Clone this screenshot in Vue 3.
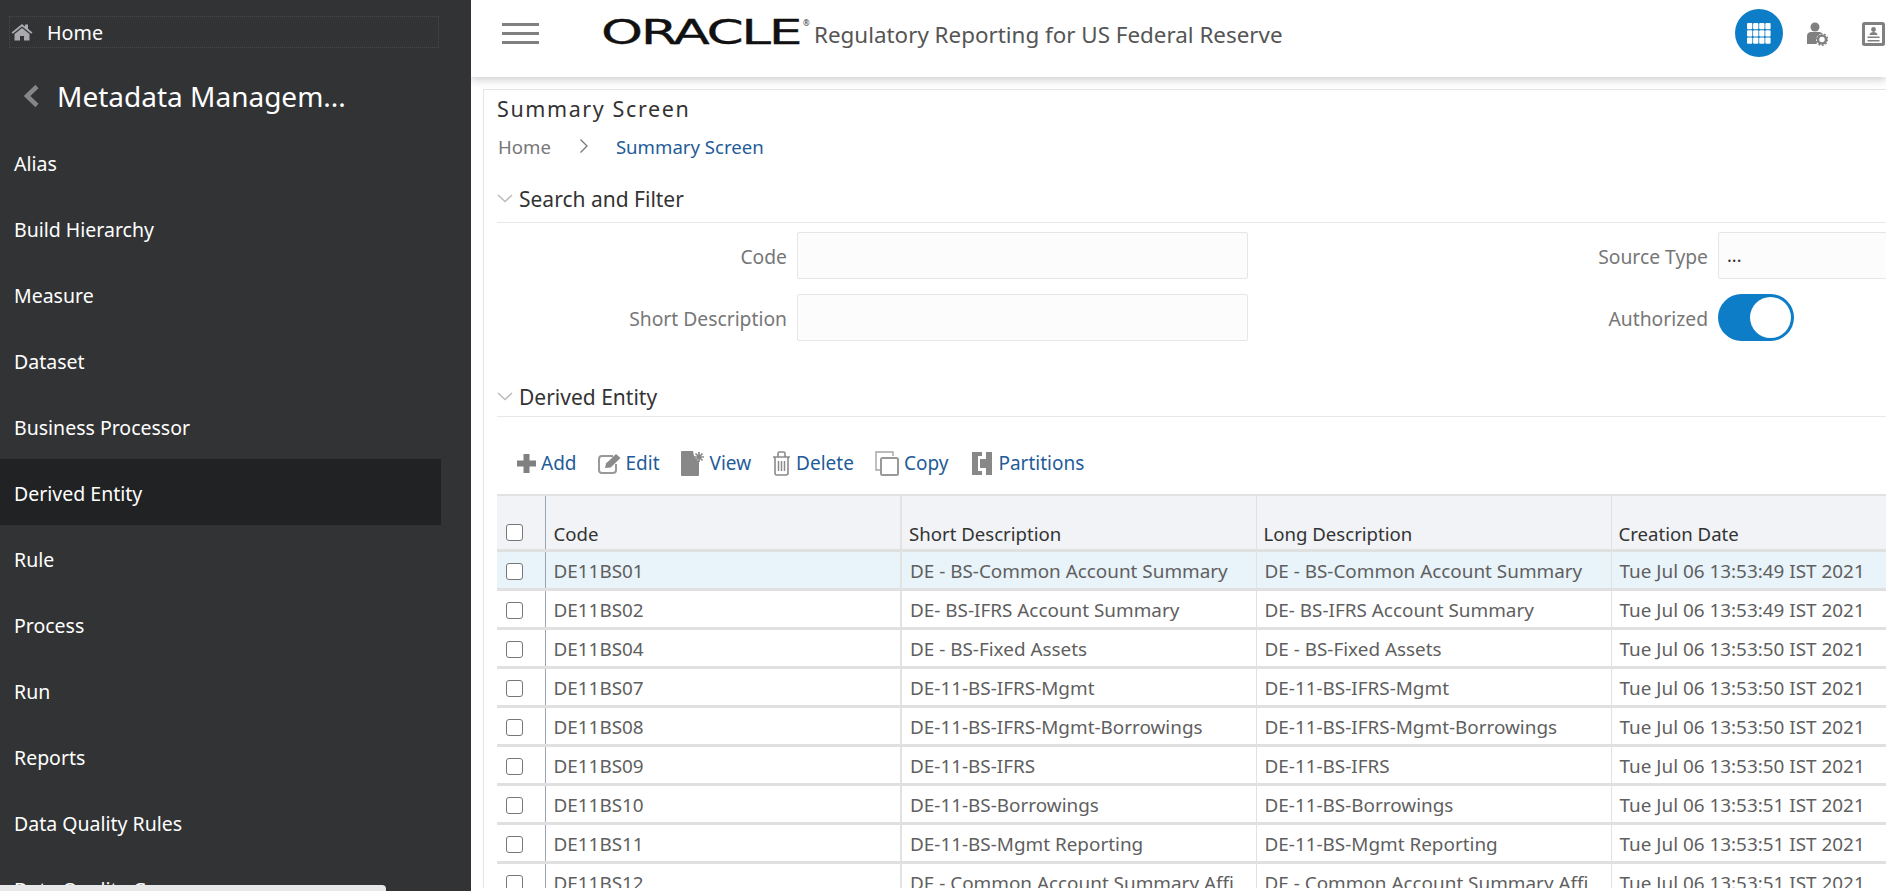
<script setup>
const menu = ['Alias','Build Hierarchy','Measure','Dataset','Business Processor','Derived Entity','Rule','Process','Run','Reports','Data Quality Rules','Data Quality Groups']
const rows = [
  ['DE11BS01','DE - BS-Common Account Summary','DE - BS-Common Account Summary','Tue Jul 06 13:53:49 IST 2021'],
  ['DE11BS02','DE- BS-IFRS Account Summary','DE- BS-IFRS Account Summary','Tue Jul 06 13:53:49 IST 2021'],
  ['DE11BS04','DE - BS-Fixed Assets','DE - BS-Fixed Assets','Tue Jul 06 13:53:50 IST 2021'],
  ['DE11BS07','DE-11-BS-IFRS-Mgmt','DE-11-BS-IFRS-Mgmt','Tue Jul 06 13:53:50 IST 2021'],
  ['DE11BS08','DE-11-BS-IFRS-Mgmt-Borrowings','DE-11-BS-IFRS-Mgmt-Borrowings','Tue Jul 06 13:53:50 IST 2021'],
  ['DE11BS09','DE-11-BS-IFRS','DE-11-BS-IFRS','Tue Jul 06 13:53:50 IST 2021'],
  ['DE11BS10','DE-11-BS-Borrowings','DE-11-BS-Borrowings','Tue Jul 06 13:53:51 IST 2021'],
  ['DE11BS11','DE-11-BS-Mgmt Reporting','DE-11-BS-Mgmt Reporting','Tue Jul 06 13:53:51 IST 2021'],
  ['DE11BS12','DE - Common Account Summary Affi','DE - Common Account Summary Affi','Tue Jul 06 13:53:51 IST 2021'],
]
</script>

<template>
  <div class="page">
    <aside class="side">
      <div class="home">
        <svg class="home-ic" width="22" height="18" viewBox="0 0 22 18"><path d="M11 1 0.5 9.5l1.3 1.3L11 3.5l9.2 7.3 1.3-1.3L17 5.8V1.5h-3v2z" fill="#a9a9ae"/><path d="M3.5 11 11 5l7.500 6v6.500h-5.500v-4.500h-4v4.500H3.500z" fill="#a9a9ae"/></svg>
        <span>Home</span>
      </div>
      <div class="back">
        <svg width="17" height="24" viewBox="0 0 17 24"><path d="M14 2.500 4 12l10 9.500" fill="none" stroke="#85858a" stroke-width="4.500"/></svg>
        <span>Metadata Managem...</span>
      </div>
      <nav class="menu">
        <div v-for="m in menu" :key="m" class="item" :class="{ on: m === 'Derived Entity' }">{{ m }}</div>
      </nav>
      <div class="hscroll"></div>
    </aside>

    <main class="main">
      <header class="top">
        <div class="burger"><i></i><i></i><i></i></div>
        <span class="logo"><span class="logo-t">ORACLE</span></span><sup class="reg">®</sup>
        <span class="product">Regulatory Reporting for US Federal Reserve</span>
        <div class="grid-btn">
          <svg width="24" height="21" viewBox="0 0 24 21" fill="#fff">
            <template v-for="r in 3" :key="r">
              <rect v-for="c in 4" :key="c" :x="(c-1)*6.1" :y="(r-1)*7.2" width="5.3" height="6.300" rx="1"/>
            </template>
          </svg>
        </div>
        <svg class="user-ic" width="22" height="24" viewBox="0 0 22 24">
          <circle cx="9" cy="5" r="4.500" fill="#808080"/>
          <path d="M1 22v-8c0-3 2-4 4-4h8c1.500 0 2.500.5 3 1.500-3 .5-6 3-6 6.500 0 1.500.5 3 1 4z" fill="#808080"/>
          <circle cx="16" cy="17.500" r="4" fill="none" stroke="#808080" stroke-width="2.500"/>
          <circle cx="16" cy="17.500" r="5.800" fill="none" stroke="#808080" stroke-width="1.400" stroke-dasharray="1.800 1.800"/>
        </svg>
        <svg class="card-ic" width="23" height="24" viewBox="0 0 23 24">
          <rect x="1.500" y="1.500" width="20" height="21" rx="1" fill="none" stroke="#808080" stroke-width="3"/>
          <circle cx="11.500" cy="7.500" r="2.400" fill="#808080"/>
          <path d="M7.500 13c0-2 2-3 4-3s4 1 4 3zM5.500 14.500h12v1.400h-12zM5.500 18h12v1.400h-12z" fill="#808080"/>
        </svg>
      </header>

      <section class="panel">
        <h1 class="title">Summary Screen</h1>
        <div class="crumbs">
          <span class="c-home">Home</span>
          <svg width="10" height="16" viewBox="0 0 10 16"><path d="M1.500 1.500 8 8l-6.500 6.500" fill="none" stroke="#777" stroke-width="1.300"/></svg>
          <span class="c-cur">Summary Screen</span>
        </div>

        <div class="sec first">
          <svg width="16" height="9" viewBox="0 0 16 9"><path d="M1 1l7 6.500L15 1" fill="none" stroke="#bbb" stroke-width="1.500"/></svg>
          <span>Search and Filter</span>
        </div>
        <div class="form">
          <label>Code</label><div class="inp"></div>
          <label>Source Type</label><div class="inp val">...</div>
          <label>Short Description</label><div class="inp"></div>
          <label>Authorized</label><div class="toggle"><span></span></div>
        </div>

        <div class="sec second">
          <svg width="16" height="9" viewBox="0 0 16 9"><path d="M1 1l7 6.500L15 1" fill="none" stroke="#bbb" stroke-width="1.500"/></svg>
          <span>Derived Entity</span>
        </div>

        <div class="tools">
          <a class="t-add">
            <svg width="19" height="19" viewBox="0 0 19 19"><path d="M6.500 0h6v6.500H19v6h-6.500V19h-6v-6.500H0v-6h6.500z" fill="#808080"/></svg>Add</a>
          <a class="t-edit">
            <svg width="24" height="21" viewBox="0 0 24 21"><path d="M18 11v6a3 3 0 0 1-3 3H4a3 3 0 0 1-3-3V6a3 3 0 0 1 3-3h11" fill="none" stroke="#999" stroke-width="2"/><path d="M7 15l1-4.500L18 1l4.500 4-9.800 9.500z" fill="#8a8a8a"/></svg>Edit</a>
          <a class="t-view">
            <svg width="24" height="25" viewBox="0 0 24 25"><path d="M1 0h11l1 5 3 4 2 1v14a1 1 0 0 1-1 1H1a1 1 0 0 1-1-1V1a1 1 0 0 1 1-1z" fill="#888"/><path d="M18 1v10M13 6h10M14.500 2.500l7 7M21.500 2.500l-7 7" stroke="#888" stroke-width="1.700"/></svg>View</a>
          <a class="t-del">
            <svg width="19" height="25" viewBox="0 0 19 25" fill="none" stroke="#8a8a8a" stroke-width="1.600"><path d="M1 6h17M6 6V2.500A1.500 1.500 0 0 1 7.500 1h4A1.500 1.500 0 0 1 13 2.500V6M3 6v16a2 2 0 0 0 2 2h9a2 2 0 0 0 2-2V6"/><path d="M6.500 10v10M9.500 10v10M12.500 10v10" stroke-width="1.500"/></svg>Delete</a>
          <a class="t-copy">
            <svg width="24" height="25" viewBox="0 0 24 25" fill="none"><path d="M18 5V1H1v18h4" stroke="#a5a5a5" stroke-width="1.400"/><rect x="6" y="7" width="17" height="17" rx="1.500" stroke="#999" stroke-width="2"/></svg>Copy</a>
          <a class="t-part">
            <svg width="20" height="23" viewBox="0 0 20 23" fill="#888"><path d="M0 0h10v4H6v15h4v4H0z"/><path d="M14 0h6v23h-6v-7H8V7h6z"/></svg>Partitions</a>
        </div>

        <div class="table-wrap">
          <table>
            <colgroup><col class="c0"><col class="c1"><col class="c2"><col class="c2b"><col></colgroup>
            <thead>
              <tr>
                <th class="chk"><span class="box"></span></th>
                <th>Code</th><th>Short Description</th><th>Long Description</th><th>Creation Date</th>
              </tr>
            </thead>
            <tbody>
              <tr v-for="(r, i) in rows" :key="r[0]" :class="{ sel: i === 0 }">
                <td class="chk"><span class="box"></span></td>
                <td v-for="(c, j) in r" :key="j">{{ c }}</td>
              </tr>
            </tbody>
          </table>
        </div>
      </section>
    </main>
  </div>
</template>

<style>
html, body { margin: 0; height: 100%; overflow: hidden; background: #fff; }
</style>

<style scoped>
.page { display: flex; width: 1886px; height: 891px; overflow: hidden; font-family: "Noto Sans", "Open Sans", sans-serif; }

.side { position: relative; flex: 0 0 471px; background: #323335; color: #fff; overflow: hidden; }
.home { display: flex; align-items: center; gap: 14px; box-sizing: border-box; width: 430px; height: 32px; margin: 16px 0 0 9px; border: 1px dotted #4a4746; font-size: 19.700px; }
.home-ic { margin-left: 1px; }
.back { display: flex; align-items: center; gap: 17px; margin: 18px 0 0 23px; height: 60px; font-size: 28px; }
.menu { margin-top: 3px; }
.item { box-sizing: border-box; width: 441px; height: 66px; line-height: 69px; padding-left: 14px; font-size: 19.500px; }
.item.on { background: #212224; }
.hscroll { position: absolute; left: 0; bottom: 0; width: 386px; height: 6px; background: #e8e8e8; border-top-right-radius: 4px; }

.main { flex: 1; min-width: 0; display: flex; flex-direction: column; background: #fff; padding-bottom: 3px; box-sizing: border-box; height: 891px; overflow: hidden; }
.top { flex: 0 0 77px; display: flex; align-items: center; background: #fff; box-shadow: 0 3px 8px rgba(120,120,120,.35); position: relative; z-index: 1; }
.burger { display: flex; flex-direction: column; gap: 6px; margin-left: 31px; width: 37px; margin-top: -11px; }
.burger i { display: block; height: 3px; background: #808080; }
.logo { display: block; margin-left: 62px; margin-top: -13px; width: 202px; }
.logo-t { display: inline-block; font: 400 34px/1 "DejaVu Sans", sans-serif; -webkit-text-stroke: .300px #111; color: #111; transform: scaleX(1.570); transform-origin: left center; letter-spacing: -1.500px; white-space: nowrap; }
.reg { font-size: 8px; color: #333; margin: -32px 0 0 0; width: 11px; }
.product { margin-top: -9px; font-size: 22.400px; color: #555; white-space: nowrap; }
.grid-btn { margin-left: auto; width: 48px; height: 48px; border-radius: 50%; background: #0d7dc7; display: flex; align-items: center; justify-content: center; margin-top: -11px; }
.user-ic { margin-left: 23px; margin-top: -9px; }
.card-ic { margin-left: 34px; margin-right: 1px; margin-top: -9px; }

.panel { flex: 1; min-height: 0; overflow: hidden; margin: 12px 0 0 12px; padding-left: 13px; border-left: 1px solid #e4e4e4; border-top: 1px solid #e4e4e4; }
.title { margin: 5px 0 0; font-size: 21.500px; line-height: 28px; font-weight: 400; letter-spacing: 1.600px; color: #333; }
.crumbs { display: flex; align-items: center; height: 26px; margin-top: 10px; padding-left: 1px; font-size: 18.600px; }
.crumbs svg { margin: 0 27px 0 28px; }
.c-home { color: #777; }
.c-cur { color: #1f5c99; }
.sec { display: flex; align-items: center; gap: 6px; box-sizing: border-box; height: 34px; border-bottom: 1px solid #e8e8e8; font-size: 21px; color: #333; padding-bottom: 6px; }
.sec.first { margin-top: 26px; height: 38px; padding-bottom: 10px; }
.sec.second { margin-top: 41px; height: 35px; padding-bottom: 5px; }
.form { display: grid; grid-template-columns: 290px 451px 450px 300px; grid-auto-rows: 47px; row-gap: 15px; column-gap: 10px; margin-top: 9px; }
.form label { text-align: right; line-height: 49px; font-size: 19.300px; color: #777; }
.inp { box-sizing: border-box; border: 1px solid #e6e6e6; border-radius: 2px; background: #fcfcfc; font-size: 18px; line-height: 45px; padding-left: 8px; color: #333; }
.toggle { box-sizing: border-box; width: 76px; height: 47px; border-radius: 24px; background: #0d7dc7; position: relative; }
.toggle span { position: absolute; top: 3px; right: 3px; width: 41px; height: 41px; border-radius: 50%; background: #fff; }

.tools { display: flex; align-items: center; height: 30px; margin-top: 31px; padding-left: 20px; font-size: 19px; color: #1f5c99; }
.tools a { display: flex; align-items: center; white-space: nowrap; margin-right: 21px; }
.tools .t-copy { margin-right: 24px; }
.t-add svg { margin-right: 5px; }
.t-edit svg { margin-right: 4px; }
.t-view svg { margin-right: 5px; }
.t-del svg { margin-right: 5px; }
.t-copy svg { margin-right: 5px; }
.t-part svg { margin-right: 6px; }

.table-wrap { margin-top: 16px; overflow: hidden; }
table { border-collapse: collapse; table-layout: fixed; width: 1389px; font-size: 18.900px; }
.c0 { width: 48px; }
.c1 { width: 356px; }
.c2, .c2b { width: 355px; }
th { height: 55px; box-sizing: border-box; background: #f1f3f6; font-size: 18.600px; font-weight: 400; color: #333; text-align: left; vertical-align: bottom; padding: 0 0 3px 7px; border-top: 2px solid #e2e2e2; border-left: 1px solid #e2e2e2; border-bottom: 3px solid #e0e0e0; white-space: nowrap; }
td { height: 39px; box-sizing: border-box; color: #5f5f5f; padding: 2px 0 0 8px; border-left: 1px solid #e2e2e2; border-bottom: 3px solid #e0e0e0; white-space: nowrap; overflow: hidden; }
th:nth-child(2), td:nth-child(2) { border-left: 1px solid #9aa3b0; padding-left: 8px; }
th:nth-child(3), td:nth-child(3) { border-left-width: 2px; }
th.chk, td.chk { padding: 0 0 0 9px; text-align: left; border-left: 0; }
th.chk { padding-bottom: 6px; }
.sel td { background: #e8f3fa; }
.box { display: inline-block; box-sizing: border-box; width: 17px; height: 17px; border: 1.500px solid #777; border-radius: 3px; background: #fff; vertical-align: middle; }
</style>
